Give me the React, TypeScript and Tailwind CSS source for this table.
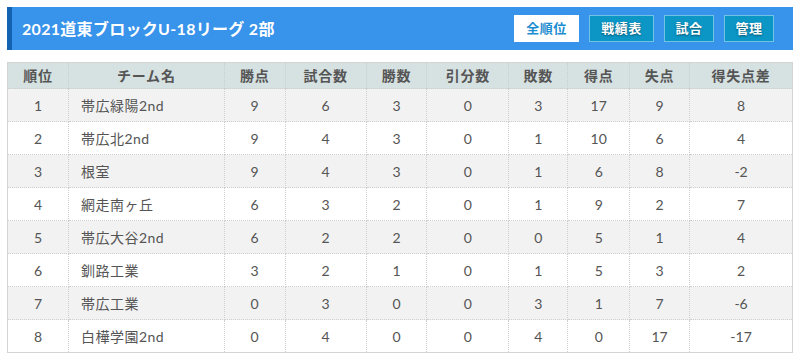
const cols = [
  { label: "順位", w: "w-[61px]" },
  { label: "チーム名", w: "w-[156px]" },
  { label: "勝点", w: "w-[61px]" },
  { label: "試合数", w: "w-[81px]" },
  { label: "勝数", w: "w-[61px]" },
  { label: "引分数", w: "w-[82px]" },
  { label: "敗数", w: "w-[59px]" },
  { label: "得点", w: "w-[62px]" },
  { label: "失点", w: "w-[60px]" },
  { label: "得失点差", w: "w-[103px]" },
];

const rows: (string | number)[][] = [
  [1, "帯広緑陽2nd", 9, 6, 3, 0, 3, 17, 9, 8],
  [2, "帯広北2nd", 9, 4, 3, 0, 1, 10, 6, 4],
  [3, "根室", 9, 4, 3, 0, 1, 6, 8, -2],
  [4, "網走南ヶ丘", 6, 3, 2, 0, 1, 9, 2, 7],
  [5, "帯広大谷2nd", 6, 2, 2, 0, 0, 5, 1, 4],
  [6, "釧路工業", 3, 2, 1, 0, 1, 5, 3, 2],
  [7, "帯広工業", 0, 3, 0, 0, 3, 1, 7, -6],
  [8, "白樺学園2nd", 0, 4, 0, 0, 4, 0, 17, -17],
];

const font = { fontFamily: '"Lato", "Noto Sans CJK JP", sans-serif' };

function NavButton({ label, active, w }: { label: string; active?: boolean; w: string }) {
  return (
    <div
      className={`${w} h-[27px] flex items-center justify-center text-[13px] font-bold tracking-[0.5px] border ${
        active
          ? "bg-white border-white text-[#1b8dd0]"
          : "bg-[#0b96c6] border-[#72c2e6] text-white [text-shadow:0_1px_2px_rgba(0,0,0,0.45)]"
      }`}
    >
      {label}
    </div>
  );
}

export default function App() {
  return (
    <div className="w-[800px] h-[362px] bg-white pt-[7px] px-[7px] text-[#555]" style={font}>
      <div className="h-[43px] flex items-center bg-[#3893ea] border-l-[5px] border-[#1463b3] pl-[10px] pr-[19px]">
        <h1 className="flex-1 text-white text-[16px] font-bold tracking-[0.3px]">2021道東ブロックU-18リーグ 2部</h1>
        <div className="flex gap-[10px]">
          <NavButton label="全順位" active w="w-[65px]" />
          <NavButton label="戦績表" w="w-[65px]" />
          <NavButton label="試合" w="w-[50px]" />
          <NavButton label="管理" w="w-[50px]" />
        </div>
      </div>

      <table className="mt-[12px] border-collapse border border-[#d4d4d4] text-[14px]">
        <thead>
          <tr className="bg-[#d6e1e1] h-[26px]">
            {cols.map((c) => (
              <th
                key={c.label}
                className={`${c.w} p-0 font-bold text-[#555] text-center tracking-[0.8px] border-x border-dotted border-[#c8cfcf]`}
              >
                {c.label}
              </th>
            ))}
          </tr>
        </thead>
        <tbody>
          {rows.map((r, i) => (
            <tr key={i} className={`h-[33px] ${i % 2 === 0 ? "bg-[#f2f2f2]" : "bg-white"}`}>
              {r.map((v, j) => (
                <td
                  key={j}
                  className={`p-0 border border-dotted border-[#cfcfcf] ${
                    j === 1 ? "text-left pl-[12px] tracking-[0.5px]" : "text-center"
                  }`}
                >
                  {v}
                </td>
              ))}
            </tr>
          ))}
        </tbody>
      </table>
    </div>
  );
}
